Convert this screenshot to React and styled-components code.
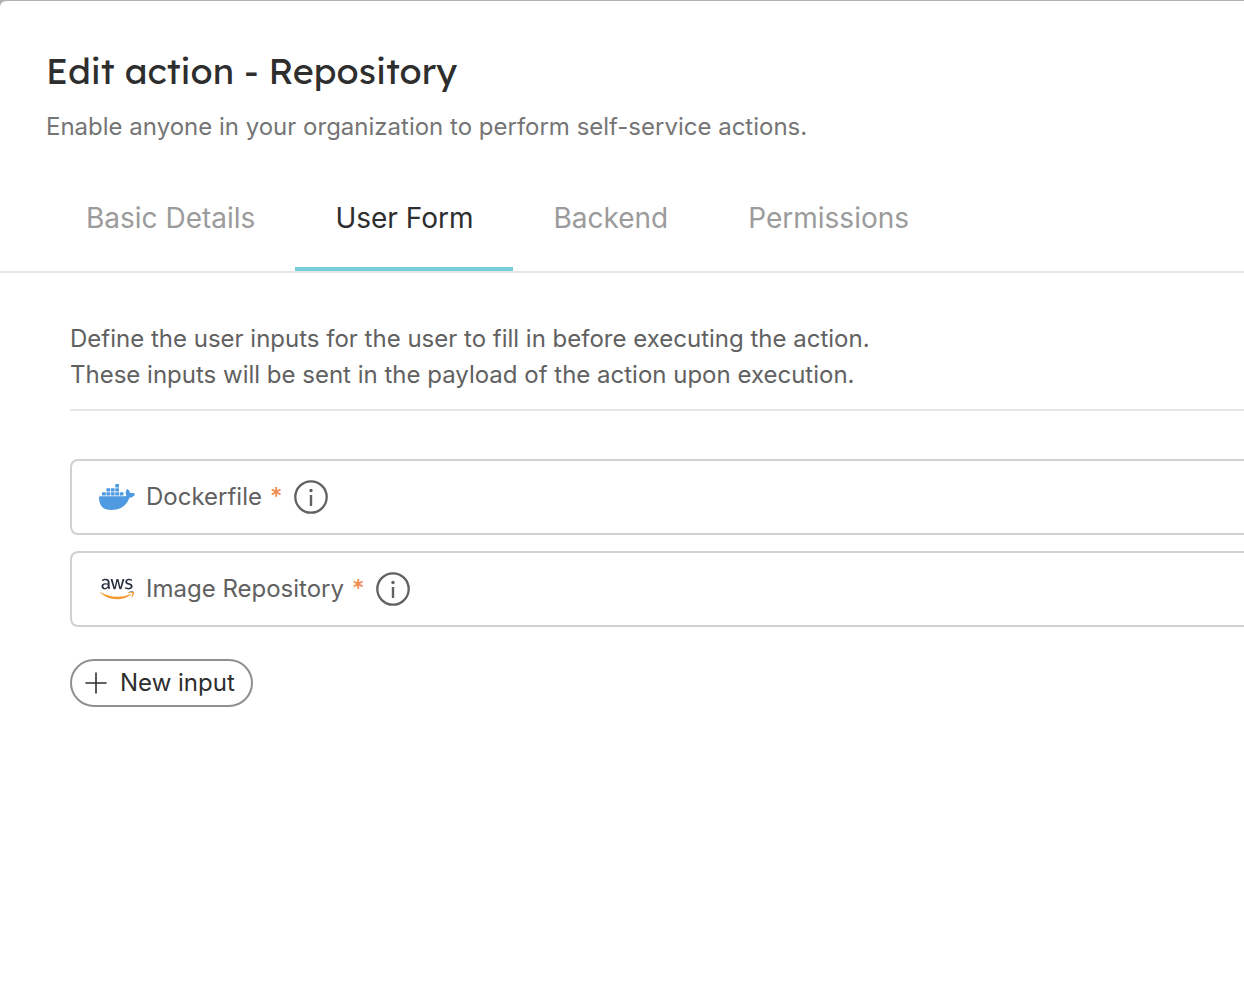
import React, { useState } from "react";
import styled, { createGlobalStyle } from "styled-components";
import { FaAws } from "react-icons/fa";
import { SiDocker } from "react-icons/si";

const GlobalStyle = createGlobalStyle`
  *, *::before, *::after { box-sizing: border-box; }
  body {
    margin: 0;
    background: #b0b0b0;
    color: #2e2e2e;
    font-family: Inter, "Liberation Sans", sans-serif;
  }
`;

const Dialog = styled.main`
  min-height: calc(100vh - 1px);
  margin-top: 1px;
  background: #fff;
  border-top-left-radius: 6px;
`;

const Header = styled.header`
  padding: 46px 46px 0;
`;

const Title = styled.h1`
  margin: 0;
  font-family: Lexend, Inter, sans-serif;
  font-size: 36px;
  font-weight: 400;
  line-height: 48px;
`;

const Subtitle = styled.p`
  margin: 14px 0 0;
  color: #757575;
  font-size: 24px;
  line-height: 36px;
`;

const Tabs = styled.nav`
  display: flex;
  margin-top: 24px;
  padding: 0 46px;
  border-bottom: 2px solid #e6e6e6;
`;

const Tab = styled.button`
  height: 102px;
  padding: 0 40px;
  border: 0;
  border-bottom: 4px solid ${(p) => (p.$active ? "#76d0da" : "transparent")};
  background: none;
  color: ${(p) => (p.$active ? "#2e2e2e" : "#9b9b9b")};
  font-family: inherit;
  font-size: 28px;
  line-height: 40px;
  cursor: pointer;
`;

const Panel = styled.section`
  padding: 48px 0 48px 70px;
`;

const Intro = styled.p`
  margin: 0;
  padding-bottom: 16px;
  border-bottom: 2px solid #e6e6ea;
  color: #616161;
  font-size: 24px;
  line-height: 36px;
`;

const InputList = styled.ul`
  display: grid;
  gap: 16px;
  margin: 48px 0 32px;
  padding: 0;
  list-style: none;
`;

const InputRow = styled.li`
  display: flex;
  align-items: center;
  height: 76px;
  padding: 0 27px;
  border: 2px solid #d1d1d1;
  border-right: 0;
  border-radius: 8px 0 0 8px;
  color: #616161;
  font-size: 24px;
  line-height: 36px;
`;

const Logo = styled.span`
  display: flex;
  justify-content: center;
  flex: none;
  width: 36px;
  margin-right: 11px;
`;

const AwsMark = styled(FaAws)`
  path { fill: url(#aws-colors); }
`;

const Defs = styled.svg`
  position: absolute;
`;

const Required = styled.span`
  margin: 0 12px 0 8px;
  color: #f08b4f;
  font-weight: 500;
`;

const InfoButton = styled.button`
  display: flex;
  padding: 0;
  border: 0;
  background: none;
  color: #616161;
  cursor: pointer;
`;

const NewInput = styled.button`
  display: flex;
  align-items: center;
  gap: 12px;
  height: 48px;
  padding: 0 16px 0 12px;
  border: 2px solid #8f8f8f;
  border-radius: 24px;
  background: #fff;
  color: #2e2e2e;
  font-family: inherit;
  font-size: 24px;
  line-height: 36px;
  cursor: pointer;
`;

const InfoIcon = () => (
  <svg width="34" height="34" viewBox="0 0 34 34" aria-hidden="true">
    <circle cx="17" cy="17" r="15.7" fill="none" stroke="currentColor" strokeWidth="2.3" />
    <circle cx="17" cy="10.5" r="1.7" fill="currentColor" />
    <path d="M17 15v11" stroke="currentColor" strokeWidth="2.4" />
  </svg>
);

const PlusIcon = () => (
  <svg width="24" height="24" viewBox="0 0 24 24" aria-hidden="true">
    <path d="M12 1.5v21M1.5 12h21" stroke="currentColor" strokeWidth="1.6" />
  </svg>
);

const AwsLogo = () => (
  <>
    <Defs width="0" height="0" aria-hidden="true">
      <linearGradient id="aws-colors" gradientUnits="userSpaceOnUse" x1="0" y1="0" x2="0" y2="512">
        <stop offset="0.62" stopColor="#252f3e" />
        <stop offset="0.62" stopColor="#f79a2e" />
      </linearGradient>
    </Defs>
    <AwsMark size={34} />
  </>
);

const tabs = ["Basic Details", "User Form", "Backend", "Permissions"];

const inputs = [
  { name: "Dockerfile", logo: <SiDocker size={36} color="#4f9ae0" /> },
  { name: "Image Repository", logo: <AwsLogo /> },
];

export default function App() {
  const [active, setActive] = useState("User Form");
  return (
    <>
      <GlobalStyle />
      <Dialog>
        <Header>
          <Title>Edit action - Repository</Title>
          <Subtitle>Enable anyone in your organization to perform self-service actions.</Subtitle>
        </Header>
        <Tabs>
          {tabs.map((tab) => (
            <Tab key={tab} type="button" $active={tab === active} onClick={() => setActive(tab)}>
              {tab}
            </Tab>
          ))}
        </Tabs>
        <Panel>
          <Intro>
            Define the user inputs for the user to fill in before executing the action.
            <br />
            These inputs will be sent in the payload of the action upon execution.
          </Intro>
          <InputList>
            {inputs.map(({ name, logo }) => (
              <InputRow key={name}>
                <Logo>{logo}</Logo>
                {name}
                <Required>*</Required>
                <InfoButton type="button" aria-label={`About ${name}`}>
                  <InfoIcon />
                </InfoButton>
              </InputRow>
            ))}
          </InputList>
          <NewInput type="button">
            <PlusIcon />
            New input
          </NewInput>
        </Panel>
      </Dialog>
    </>
  );
}
